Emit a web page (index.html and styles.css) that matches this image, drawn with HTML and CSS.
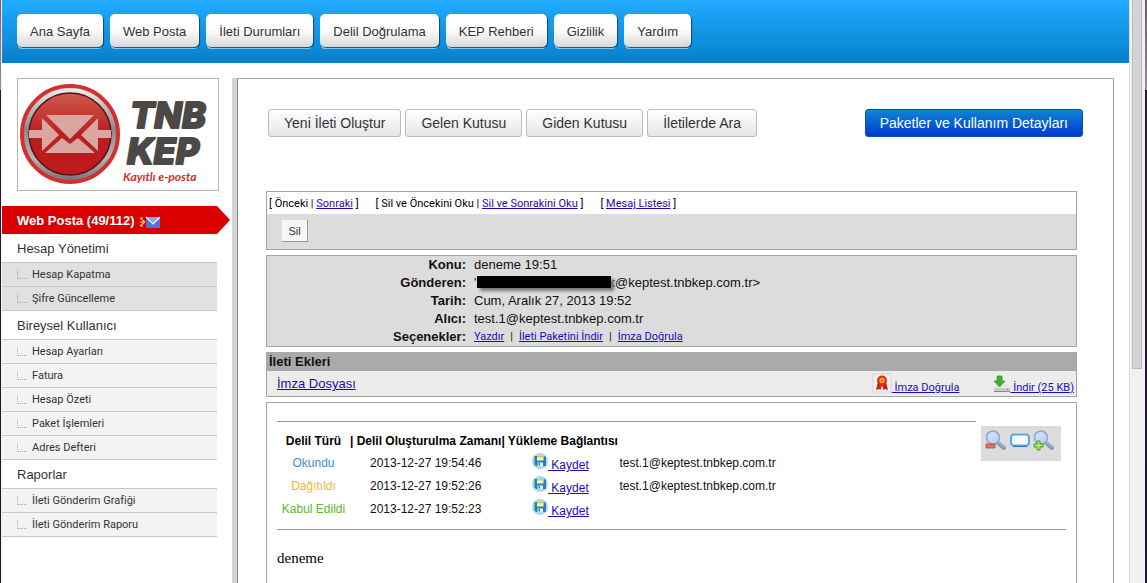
FILE: index.html
```html
<!DOCTYPE html>
<html lang="tr">
<head>
<meta charset="utf-8">
<title>TNB KEP - Web Posta</title>
<link rel="stylesheet" href="styles.css">
</head>
<body>
<svg class="defs" width="0" height="0" aria-hidden="true">
  <defs>
    <linearGradient id="lens" x1="0" y1="0" x2="1" y2="1"><stop offset="0" stop-color="#d6e4f8"/><stop offset="1" stop-color="#b4cdf2"/></linearGradient>
    <g id="magnifier">
      <path d="M12.5 12.5l6.5 5.5" stroke="#7f93b8" stroke-width="4" stroke-linecap="round"/>
      <path d="M13 12.2l6 5" stroke="#a9b9d6" stroke-width="1.4" stroke-linecap="round"/>
      <circle cx="8" cy="7.500" r="6.500" fill="url(#lens)" stroke="#8fa6d0" stroke-width="1.6"/>
    </g>
    <g id="disk">
      <circle cx="8" cy="8" r="8" fill="#a9dcf0"/>
      <path d="M2.500 3h10l1.500 1.500V13H4l-1.500-1.500z" fill="#2b7fae"/>
      <path d="M5 3h6.500v4.500H5z" fill="#f7f3d8"/>
      <path d="M5 3h6.500v1.500H5z" fill="#f0c64a"/>
      <path d="M5.500 9.500h5.500V13H5.500z" fill="#e6f5fb"/>
      <path d="M6.500 10h1.500v2.500H6.500z" fill="#2b7fae"/>
    </g>
  </defs>
</svg>
<div class="window">
  <div class="edge"></div>
  <div class="page">
    <nav class="topnav">
      <button class="navbtn">Ana Sayfa</button>
      <button class="navbtn">Web Posta</button>
      <button class="navbtn">İleti Durumları</button>
      <button class="navbtn">Delil Doğrulama</button>
      <button class="navbtn">KEP Rehberi</button>
      <button class="navbtn">Gizlilik</button>
      <button class="navbtn">Yardım</button>
    </nav>
    <div class="columns">
      <aside class="sidebar">
        <div class="logo">
          <svg viewBox="18 79 200 111" width="200" height="111" role="img" aria-label="TNB KEP Kayıtlı e-posta">
            <defs>
              <linearGradient id="red" x1="0" y1="0" x2="0" y2="1"><stop offset="0" stop-color="#cf5a4c"/><stop offset=".5" stop-color="#b81f22"/><stop offset="1" stop-color="#c0191c"/></linearGradient>
              <linearGradient id="ring" x1="0" y1="0" x2="0" y2="1"><stop offset="0" stop-color="#f4f4f4"/><stop offset=".45" stop-color="#8b8b8f"/><stop offset=".75" stop-color="#b5b5b8"/><stop offset="1" stop-color="#707074"/></linearGradient>
            </defs>
            <circle cx="70" cy="134" r="48" fill="url(#ring)" stroke="#d3302c" stroke-width="4"/>
            <circle cx="70" cy="134" r="41" fill="url(#red)" stroke="#5a1013" stroke-width="1.500"/>
            <g fill="#d9a7a0">
              <path d="M46 115h48L70 139z"/>
              <path d="M42 118v12H29v8h13v13l17-16z"/>
              <path d="M98 118v12h13v8H98v13L81 135z"/>
              <path d="M45 153l17-15 8 6 8-6 17 15z"/>
            </g>
            <text class="logo-name" x="130" y="128">TNB</text>
            <text class="logo-name" x="127" y="164">KEP</text>
            <text class="logo-tag" x="123" y="181">Kayıtlı e-posta</text>
          </svg>
        </div>
        <div class="current">
          <a href="#">Web Posta (49/112)</a>
          <svg width="22" height="14" viewBox="0 0 22 14" aria-hidden="true">
            <path d="M1 3l5 4M1 11l5-4M1 7h5M3 2v3M3 9v3" stroke="#ffc56b" stroke-width="1.2"/>
            <rect x="7" y="2" width="14" height="11" fill="#5672d8"/>
            <path d="M7 2h14l-7 7z" fill="#8aa4f0"/>
            <path d="M7 2l7 7 7-7" fill="none" stroke="#fff" stroke-width="1.2"/>
          </svg>
        </div>
        <h2 class="group">Hesap Yönetimi</h2>
        <ul class="menu menu-dark">
          <li><a href="#">Hesap Kapatma</a></li>
          <li><a href="#">Şifre Güncelleme</a></li>
        </ul>
        <h2 class="group">Bireysel Kullanıcı</h2>
        <ul class="menu">
          <li><a href="#">Hesap Ayarları</a></li>
          <li><a href="#">Fatura</a></li>
          <li><a href="#">Hesap Özeti</a></li>
          <li><a href="#">Paket İşlemleri</a></li>
          <li><a href="#">Adres Defteri</a></li>
        </ul>
        <h2 class="group">Raporlar</h2>
        <ul class="menu">
          <li><a href="#">İleti Gönderim Grafiği</a></li>
          <li><a href="#">İleti Gönderim Raporu</a></li>
        </ul>
      </aside>
      <main class="panel">
        <div class="toolbar">
          <button class="tool">Yeni İleti Oluştur</button>
          <button class="tool">Gelen Kutusu</button>
          <button class="tool">Giden Kutusu</button>
          <button class="tool">İletilerde Ara</button>
          <button class="tool tool-blue">Paketler ve Kullanım Detayları</button>
        </div>
        <div class="mail">
          <section class="box">
            <div class="pager">
              <span>[ Önceki | <a href="#">Sonraki</a> ]</span>
              <span>[ Sil ve Öncekini Oku | <a href="#">Sil ve Sonrakini Oku</a> ]</span>
              <span>[ <a href="#">Mesaj Listesi</a> ]</span>
            </div>
            <div class="actions"><button class="delete">Sil</button></div>
          </section>
          <section class="box">
            <dl class="headers">
              <dt>Konu:</dt><dd>deneme 19:51</dd>
              <dt>Gönderen:</dt><dd>'<span class="redacted"></span>k@keptest.tnbkep.com.tr&gt;</dd>
              <dt>Tarih:</dt><dd>Cum, Aralık 27, 2013 19:52</dd>
              <dt>Alıcı:</dt><dd>test.1@keptest.tnbkep.com.tr</dd>
              <dt>Seçenekler:</dt>
              <dd class="options"><a href="#">Yazdır</a><span>|</span><a href="#">İleti Paketini İndir</a><span>|</span><a href="#">İmza Doğrula</a></dd>
            </dl>
          </section>
          <section class="box attachments">
            <h3>İleti Ekleri</h3>
            <div class="file">
              <a class="filename" href="#">İmza Dosyası</a>
              <a class="fileaction" href="#"><svg width="20" height="20" viewBox="0 0 20 20" aria-hidden="true">
                <rect x="1" y="1" width="18" height="18" fill="#f4f4f4" stroke="#d2d2d2"/>
                <path d="M6 9l-2 8 3-1 1.500 1L10 12l1.500 5 1.500-1 3 1-2-8z" fill="#d61c12"/>
                <circle cx="10" cy="7.500" r="5" fill="#e02a14"/>
                <circle cx="10" cy="7.500" r="2.700" fill="#ffb52e"/><circle cx="10" cy="7.500" r="1.200" fill="#e8641a"/>
              </svg>&nbsp;İmza Doğrula</a>
              <a class="fileaction" href="#"><svg width="17" height="20" viewBox="0 0 17 20" aria-hidden="true">
                <path d="M3 11h11l3 4v4H1v-4z" fill="#e6e6e2"/><path d="M1 15h16v4H1z" fill="#c9c9c4"/><path d="M1 18h16v1H1z" fill="#8d8d88"/>
                <path d="M14 16h1v1h-1z" fill="#3fae2b"/>
                <path d="M4 3h5v5h3l-5.500 6L1 8h3z" fill="#43b02a" stroke="#2c861b" stroke-width=".6"/>
              </svg>&nbsp;İndir (25 KB)</a>
            </div>
          </section>
          <section class="box body">
            <div class="zoom">
              <button aria-label="Küçült"><svg width="22" height="22" viewBox="0 0 22 22"><use href="#magnifier"/><path d="M1 14h9v4H1z" fill="#d9746c" stroke="#b54a42" stroke-width=".8"/></svg></button>
              <button aria-label="Normal boyut"><svg width="22" height="22" viewBox="0 0 22 22"><rect x="2" y="4.500" width="18" height="11" rx="3" fill="#f4faff" stroke="#57a9e6" stroke-width="2"/><path d="M4 16.500h14" stroke="#2f6fb4" stroke-width="1"/></svg></button>
              <button aria-label="Büyüt"><svg width="22" height="22" viewBox="0 0 22 22"><use href="#magnifier"/><path d="M4 11h3v3h3v3H7v3H4v-3H1v-3h3z" fill="#a5e878" stroke="#3f9f22"/></svg></button>
            </div>
            <hr class="rule rule-top">
            <table class="evidence">
              <thead><tr><th class="type">Delil Türü</th><th class="date">| Delil Oluşturulma Zamanı</th><th class="save">| Yükleme Bağlantısı</th><td></td></tr></thead>
              <tbody>
                <tr><td class="blue">Okundu</td><td>2013-12-27 19:54:46</td><td><a href="#"><svg width="16" height="16" aria-hidden="true"><use href="#disk"/></svg>&nbsp;Kaydet</a></td><td class="who">test.1@keptest.tnbkep.com.tr</td></tr>
                <tr><td class="yellow">Dağıtıldı</td><td>2013-12-27 19:52:26</td><td><a href="#"><svg width="16" height="16" aria-hidden="true"><use href="#disk"/></svg>&nbsp;Kaydet</a></td><td class="who">test.1@keptest.tnbkep.com.tr</td></tr>
                <tr><td class="green">Kabul Edildi</td><td>2013-12-27 19:52:23</td><td><a href="#"><svg width="16" height="16" aria-hidden="true"><use href="#disk"/></svg>&nbsp;Kaydet</a></td><td></td></tr>
              </tbody>
            </table>
            <hr class="rule">
            <p class="message">deneme</p>
          </section>
        </div>
      </main>
    </div>
  </div>
  <div class="scroll"><div class="thumb"></div></div>
  <div class="edge edge-right"></div>
</div>
</body>
</html>
```
FILE: styles.css
```css
* { box-sizing: border-box; }
body { margin: 0; font-family: "Liberation Sans", Arial, sans-serif; font-size: 13px; color: #222; background: #fff; }
button { font-family: inherit; }
a { color: #1a0db8; }
.defs { position: absolute; }

.window { display: grid; grid-template-columns: 2px minmax(0, 1fr) 15px 3px; height: 100vh; overflow: hidden; }
.edge { border-right: 1px solid #f4f0f4; background: linear-gradient(#6a5a66, #9a8c96 90px, #2a1830 90px, #1c1630); }
.edge-right { border-right: 0; border-left: 1px solid #f4f0f4; }
.scroll { background: #f1f1f1; border-left: 1px solid #dcdcdc; padding: 0 2px; }
.thumb { height: 369px; background: #d4d4d4; border: 1px solid #bdbdbd; border-top: 0; }
.page { display: flex; flex-direction: column; min-width: 0; min-height: 0; }

.topnav { flex: none; display: flex; gap: 7px; height: 63px; padding: 14px 15px; background: linear-gradient(#21abff, #0580cc); }
.navbtn { height: 33px; padding: 2px 13px 0; border: 0; border-radius: 5px; font-size: 13px; color: #333; white-space: nowrap;
  background: linear-gradient(#fff 45%, #d8d8d8); box-shadow: 1px 1px 1px #0d4a74, 0 3px 0 -1px #8fd0f6; }

.columns { flex: 1; display: flex; gap: 2px; min-height: 0; padding: 15px 15px 0 0; }
.sidebar { flex: none; width: 228px; }
.logo { width: 202px; margin: 0 0 15px 15px; border: 1px solid #b5b5b5; }
.logo svg { display: block; }
.logo-name { font: italic 800 36px Inter, sans-serif; fill: #4b4846; stroke: #4b4846; stroke-width: 2; stroke-linejoin: round; }
.logo-tag { font: italic 700 12px Lato, sans-serif; fill: #c8322c; }
.current { display: flex; align-items: center; gap: 4px; height: 28px; padding-left: 15px; background: #d90000;
  clip-path: polygon(0 0, 215px 0, 228px 50%, 215px 100%, 0 100%); }
.current a { color: #fff; font-weight: bold; text-decoration: none; }
.current svg { margin-top: 4px; }
.group { margin: 0; height: 28px; padding-left: 15px; font-size: 13px; line-height: 30px; font-weight: normal; color: #333; }
.menu { width: 215px; margin: 0; padding: 0; list-style: none; background: #f3f3f3; border-bottom: 1px solid #c8c8c8; }
.menu-dark { background: #e1e1e1; }
.menu li { display: flex; height: 24px; padding-left: 15px; border-top: 1px solid #c8c8c8; }
.menu li::before { content: ""; width: 9px; height: 8px; margin: 7px 5px 0 0; border-left: 1px dotted #aaa; border-bottom: 1px dotted #aaa; }
.menu a { color: #333; font: 11px/24px Roboto, sans-serif; text-decoration: none; }

.panel { flex: 1; min-width: 0; display: flex; flex-direction: column; padding: 30px 30px 0 28px; position: relative;
  border-top: 1px solid #aaa; border-right: 1px solid #999; border-left: 1px solid #888;
  margin-left: 5px; box-shadow: -5px 0 0 #d4d4d4; }
.toolbar { display: flex; gap: 4px; margin-left: 2px; }
.tool { height: 28px; padding: 0 15px; border: 1px solid #bbb; border-radius: 3px; font-size: 14px; color: #333; white-space: nowrap;
  background: linear-gradient(#fff, #e6e6e6); }
.tool-blue { margin-left: auto; padding: 0 14px; color: #fff; border-color: #0a50b0; background: linear-gradient(#0b86d6, #0238d0); }

.mail { flex: 1; display: flex; flex-direction: column; gap: 5px; margin: 54px 6px 0 0; }
.box { border: 1px solid #a5a5a5; }
.pager { display: flex; gap: 17px; padding: 0 2px; height: 22px; font: 11px/23px Roboto, sans-serif; color: #000; white-space: nowrap; }
.actions { height: 35px; padding: 5px 14px; background: #dcdcdc; }
.delete { width: 27px; height: 23px; padding: 0; border: 1px solid #999; border-top-color: #ddd; border-left-color: #ddd; font-size: 11px; color: #333; background: #f6f6f6; }
.headers { display: grid; grid-template-columns: 199px 1fr; column-gap: 8px; margin: 0; background: #dcdcdc; line-height: 18px; color: #111; }
.headers dt { text-align: right; font-weight: bold; }
.headers dd { margin: 0; }
.redacted { position: relative; display: inline-block; width: 134px; height: 12px; margin: 0 -3px 0 1px; vertical-align: -1px; background: #000; box-shadow: 3px 3px 3px #777; }
.options { display: flex; gap: 6px; font-family: Roboto, sans-serif; font-size: 11px; }
.attachments h3 { margin: 0; padding-left: 2px; font-size: 13px; line-height: 19px; color: #111; background: #aaa; }
.attachments { border-top: 0; }
.file { display: flex; height: 25px; padding: 0 2px 0 10px; background: #ececec; }
.filename { margin-right: auto; line-height: 25px; }
.fileaction { padding-top: 2px; font: 11px/20px Roboto, sans-serif; white-space: nowrap; }
.fileaction + .fileaction { margin-left: 34px; }
.fileaction svg { vertical-align: -2px; }

.body { flex: 1; padding: 18px 10px 0; border-bottom: 0; }
.zoom { float: right; display: flex; gap: 2px; width: 80px; height: 35px; margin: 5px 5px 0; padding: 4px; background: #dcdcdc; }
.zoom button { padding: 0; border: 0; width: 22px; height: 22px; background: none; }
.zoom svg { display: block; }
.rule { height: 1px; margin: 0; border: 0; background: #999; }
.rule-top { overflow: hidden; margin-bottom: 8px; }
.evidence { border-collapse: collapse; margin-bottom: 9px; font-size: 12px; color: #111; text-align: center; white-space: nowrap; }
.evidence th, .evidence td { padding: 0; height: 23px; }
.evidence thead th, .evidence thead td { height: 21px; }
.evidence th { text-align: left; color: #000; }
.evidence .type { width: 73px; text-align: center; }
.evidence .date { width: 151px; }
.evidence .save { width: 118px; }
.evidence a svg { vertical-align: 0; }
.evidence .who { text-align: left; }
.blue { color: #3b8ede; }
.yellow { color: #f0b92a; }
.green { color: #5cb82c; }
.message { margin: 19px 0 0; font: 15px/18px "Liberation Serif", serif; color: #000; }
```
